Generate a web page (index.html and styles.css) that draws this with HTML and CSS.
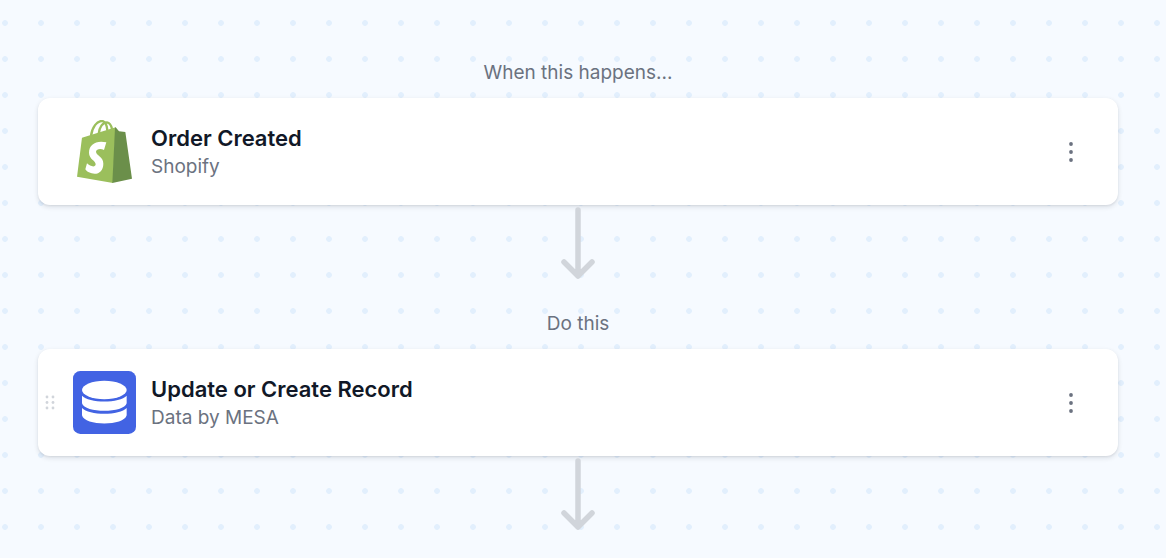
FILE: index.html
```html
<!DOCTYPE html>
<html lang="en">
<head>
<meta charset="utf-8">
<meta name="viewport" content="width=device-width, initial-scale=1">
<title>Workflow</title>
<link rel="stylesheet" href="styles.css">
</head>
<body>
<main class="canvas">
  <section class="step">
    <p class="step-label">When this happens...</p>
    <article class="card">
      <span class="handle"></span>
      <svg class="app-icon" viewBox="0 0 189 189" aria-hidden="true">
        <g fill="none" stroke="#9bbf5c" stroke-width="7">
          <path d="M54 48C57 22 72 2 88 3C100 5 102 18 103 31"/>
          <path d="M77 42C79 20 90 7 102 7C111 8 115 18 117 27"/>
        </g>
        <path fill="#9bbf5c" d="M27 53L128 22L120 189L12 170Z"/>
        <path fill="#6b8f4a" d="M128 22L138 34L157 36L177 176L118 189L126 23Z"/>
        <path fill="#fff" d="M100 67L93 90C84 85 70 86 69 95C69 107 91 109 91 131C91 154 75 165 56 160C47 158 40 153 37 148L42 130C51 139 67 144 68 133C69 122 48 118 48 98C48 73 70 60 100 67Z"/>
      </svg>
      <div class="card-text">
        <h2 class="card-title">Order Created</h2>
        <p class="card-app">Shopify</p>
      </div>
      <button class="menu" type="button" aria-label="More options for Order Created">
        <svg class="menu-icon" viewBox="0 0 20 24" aria-hidden="true"><circle cx="10" cy="4" r="1.9"/><circle cx="10" cy="12" r="1.9"/><circle cx="10" cy="20" r="1.9"/></svg>
      </button>
    </article>
    <svg class="arrow" viewBox="0 0 36 74" aria-hidden="true"><path d="M18 5V71M4 57L18 71L32 57"/></svg>
  </section>
  <section class="step">
    <p class="step-label">Do this</p>
    <article class="card">
      <span class="handle">
        <svg class="handle-icon" viewBox="0 0 10 16" aria-hidden="true"><circle cx="2" cy="2" r="1.4"/><circle cx="8" cy="2" r="1.4"/><circle cx="2" cy="7.5" r="1.4"/><circle cx="8" cy="7.5" r="1.4"/><circle cx="2" cy="13" r="1.4"/><circle cx="8" cy="13" r="1.4"/></svg>
      </span>
      <svg class="app-icon" viewBox="0 0 189 189" aria-hidden="true">
        <rect width="189" height="189" rx="22" fill="#4263e3"/>
        <g fill="#fff">
          <ellipse cx="94" cy="57" rx="67" ry="28"/>
          <path d="M27 74C47 97 141 97 161 74V97C154 127 34 127 27 97Z"/>
          <path d="M27 111C47 134 141 134 161 111V133C154 166 34 166 27 133Z"/>
        </g>
      </svg>
      <div class="card-text">
        <h2 class="card-title">Update or Create Record</h2>
        <p class="card-app">Data by MESA</p>
      </div>
      <button class="menu" type="button" aria-label="More options for Update or Create Record">
        <svg class="menu-icon" viewBox="0 0 20 24" aria-hidden="true"><circle cx="10" cy="4" r="1.9"/><circle cx="10" cy="12" r="1.9"/><circle cx="10" cy="20" r="1.9"/></svg>
      </button>
    </article>
    <svg class="arrow" viewBox="0 0 36 74" aria-hidden="true"><path d="M18 5V71M4 57L18 71L32 57"/></svg>
  </section>
</main>
</body>
</html>
```
FILE: styles.css
```css
* {
  box-sizing: border-box;
}

body {
  margin: 0;
  min-height: 100vh;
  font-family: Inter, "Liberation Sans", sans-serif;
  color: #111827;
  background-color: #f6faff;
  background-image: radial-gradient(circle, #e2effd 2.5px, transparent 3.2px);
  background-size: 36px 36px;
  background-position: -13px 5px;
}

.canvas {
  display: flex;
  flex-direction: column;
  gap: 30px;
  padding: 58px 48px 0 38px;
}

.step {
  display: flex;
  flex-direction: column;
}

.step-label {
  margin: 0 0 10px;
  font-size: 19px;
  line-height: 30px;
  text-align: center;
  color: #6b7280;
}

.card {
  display: flex;
  align-items: center;
  padding: 22px 31px 22px 0;
  background: #fff;
  border-radius: 12px;
  box-shadow: 0 2px 5px rgba(17, 24, 39, 0.12), 0 1px 2px rgba(17, 24, 39, 0.06);
}

.handle {
  display: flex;
  width: 35px;
  padding-left: 7px;
}

.handle-icon {
  width: 10px;
  height: 16px;
  fill: #d1d5db;
}

.app-icon {
  flex: none;
  width: 63px;
  height: 63px;
}

.card-text {
  flex: 1;
  padding-left: 15px;
}

.card-title {
  margin: 0;
  font-size: 22px;
  font-weight: 600;
  line-height: 30px;
}

.card-app {
  margin: 0;
  font-size: 19px;
  line-height: 28px;
  color: #6b7280;
}

.menu {
  display: flex;
  align-items: center;
  justify-content: center;
  width: 32px;
  height: 40px;
  padding: 0;
  border: 0;
  background: none;
  cursor: pointer;
}

.menu-icon {
  width: 20px;
  height: 24px;
  fill: #6b7280;
}

.arrow {
  align-self: center;
  width: 36px;
  height: 74px;
  fill: none;
  stroke: #d1d5db;
  stroke-width: 5.5;
  stroke-linecap: round;
  stroke-linejoin: round;
}
```
